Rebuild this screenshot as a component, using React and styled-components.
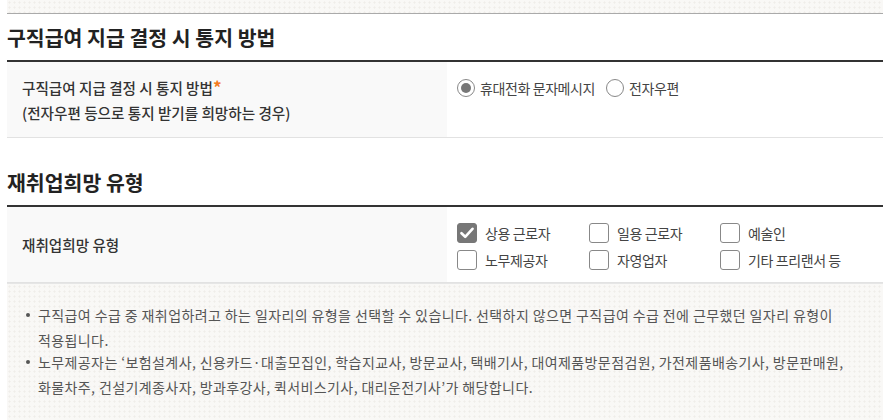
import styled, { createGlobalStyle } from "styled-components";

const GlobalStyle = createGlobalStyle`
  html, body {
    margin: 0;
    padding: 0;
    background: #fff;
    overflow: hidden;
  }
  body {
    font-family: "Noto Sans CJK KR", "Noto Sans", sans-serif;
    color: #333;
    word-break: keep-all;
  }
`;

const dotted = `
  background-color: #f9f8f6;
  background-image: radial-gradient(#efede9 0.9px, transparent 1.2px);
  background-size: 5px 5px;
`;

const Page = styled.div`
  width: 880px;
  margin-left: 7px;
`;

const TopBand = styled.div`
  ${dotted}
  height: 13px;
  border-bottom: 1px solid #aaa;
`;

const Section = styled.section`
  margin-top: ${(p) => p.$gap || 0}px;
`;

const Title = styled.h3`
  margin: 0;
  padding: 9px 0;
  font-size: 20.5px;
  line-height: 28px;
  font-weight: 700;
  color: #222;
  border-bottom: 2px solid #333;
`;

const Row = styled.div`
  display: grid;
  grid-template-columns: 440px 1fr;
  height: 75px;
  border-bottom: 1px solid #e2e2e2;
`;

const LabelCell = styled.div`
  display: flex;
  flex-direction: column;
  justify-content: center;
  padding-left: 15px;
  background: #f9f9f9;
  font-size: 14.6px;
  line-height: 25px;
  font-weight: 500;
  color: #333;
`;

const Star = styled.span`
  color: #f47b20;
  font-weight: 700;
  font-size: 17px;
`;

const FieldCell = styled.div`
  padding: 16px 0 0 10px;
  background: #fff;
`;

const RadioGroup = styled.div`
  display: flex;
  align-items: center;
  gap: 11px;
`;

const Choice = styled.label`
  display: flex;
  align-items: center;
  gap: ${(p) => p.$gap || 5}px;
  font-size: 14px;
  line-height: 20px;
  color: #444;
  letter-spacing: -0.4px;
`;

const RadioMark = styled.span`
  box-sizing: border-box;
  width: 18px;
  height: 18px;
  border-radius: 50%;
  border: 1px solid #888;
  background: #fff;
  display: flex;
  align-items: center;
  justify-content: center;

  &::after {
    content: "";
    width: 10px;
    height: 10px;
    border-radius: 50%;
    background: ${(p) => (p.$on ? "#777" : "transparent")};
  }
`;

const CheckGrid = styled.div`
  display: grid;
  grid-template-columns: 132px 131px 140px;
  row-gap: 7px;
`;

const CheckMark = styled.span`
  box-sizing: border-box;
  width: 20px;
  height: 20px;
  border-radius: 3px;
  border: 1px solid ${(p) => (p.$on ? "#777" : "#888")};
  background: ${(p) => (p.$on ? "#777" : "#fff")};
  display: flex;
  align-items: center;
  justify-content: center;
`;

const InfoBox = styled.div`
  ${dotted}
  border-top: 1px solid #e6e6e6;
  padding: 19px 14px 30px 19px;
`;

const InfoList = styled.ul`
  margin: 0;
  padding: 0;
  list-style: none;
`;

const InfoItem = styled.li`
  position: relative;
  padding-left: 12px;
  font-size: 14px;
  line-height: 24.5px;
  color: #555;
  letter-spacing: 0.4px;

  & + & {
    margin-top: -2px;
  }

  &::before {
    content: "";
    position: absolute;
    left: 0;
    top: 10px;
    width: 4px;
    height: 4px;
    border-radius: 50%;
    background: #555;
  }
`;

const Check = () => (
  <svg width="14" height="12" viewBox="0 0 14 12">
    <path
      d="M1.5 6.2 L5.2 9.8 L12.5 1.8"
      fill="none"
      stroke="#fff"
      strokeWidth="2.6"
      strokeLinecap="round"
      strokeLinejoin="round"
    />
  </svg>
);

const jobTypes = [
  { label: "상용 근로자", on: true },
  { label: "일용 근로자" },
  { label: "예술인" },
  { label: "노무제공자" },
  { label: "자영업자" },
  { label: "기타 프리랜서 등" },
];

export default function App() {
  return (
    <>
      <GlobalStyle />
      <Page>
        <TopBand />

        <Section>
          <Title>구직급여 지급 결정 시 통지 방법</Title>
          <Row>
            <LabelCell>
              <div>
                구직급여 지급 결정 시 통지 방법<Star>*</Star>
              </div>
              <div>(전자우편 등으로 통지 받기를 희망하는 경우)</div>
            </LabelCell>
            <FieldCell>
              <RadioGroup>
                <Choice>
                  <RadioMark $on />
                  휴대전화 문자메시지
                </Choice>
                <Choice>
                  <RadioMark />
                  전자우편
                </Choice>
              </RadioGroup>
            </FieldCell>
          </Row>
        </Section>

        <Section $gap={21}>
          <Title>재취업희망 유형</Title>
          <Row>
            <LabelCell>
              <div>재취업희망 유형</div>
            </LabelCell>
            <FieldCell>
              <CheckGrid>
                {jobTypes.map((t) => (
                  <Choice key={t.label} $gap={8}>
                    <CheckMark $on={t.on}>{t.on && <Check />}</CheckMark>
                    {t.label}
                  </Choice>
                ))}
              </CheckGrid>
            </FieldCell>
          </Row>
        </Section>

        <InfoBox>
          <InfoList>
            <InfoItem>
              구직급여 수급 중 재취업하려고 하는 일자리의 유형을 선택할 수 있습니다. 선택하지 않으면 구직급여 수급 전에
              근무했던 일자리 유형이 적용됩니다.
            </InfoItem>
            <InfoItem>
              노무제공자는 ‘보험설계사, 신용카드·대출모집인, 학습지교사, 방문교사, 택배기사, 대여제품방문점검원,
              가전제품배송기사, 방문판매원, 화물차주, 건설기계종사자, 방과후강사, 퀵서비스기사, 대리운전기사’가
              해당합니다.
            </InfoItem>
          </InfoList>
        </InfoBox>
      </Page>
    </>
  );
}
